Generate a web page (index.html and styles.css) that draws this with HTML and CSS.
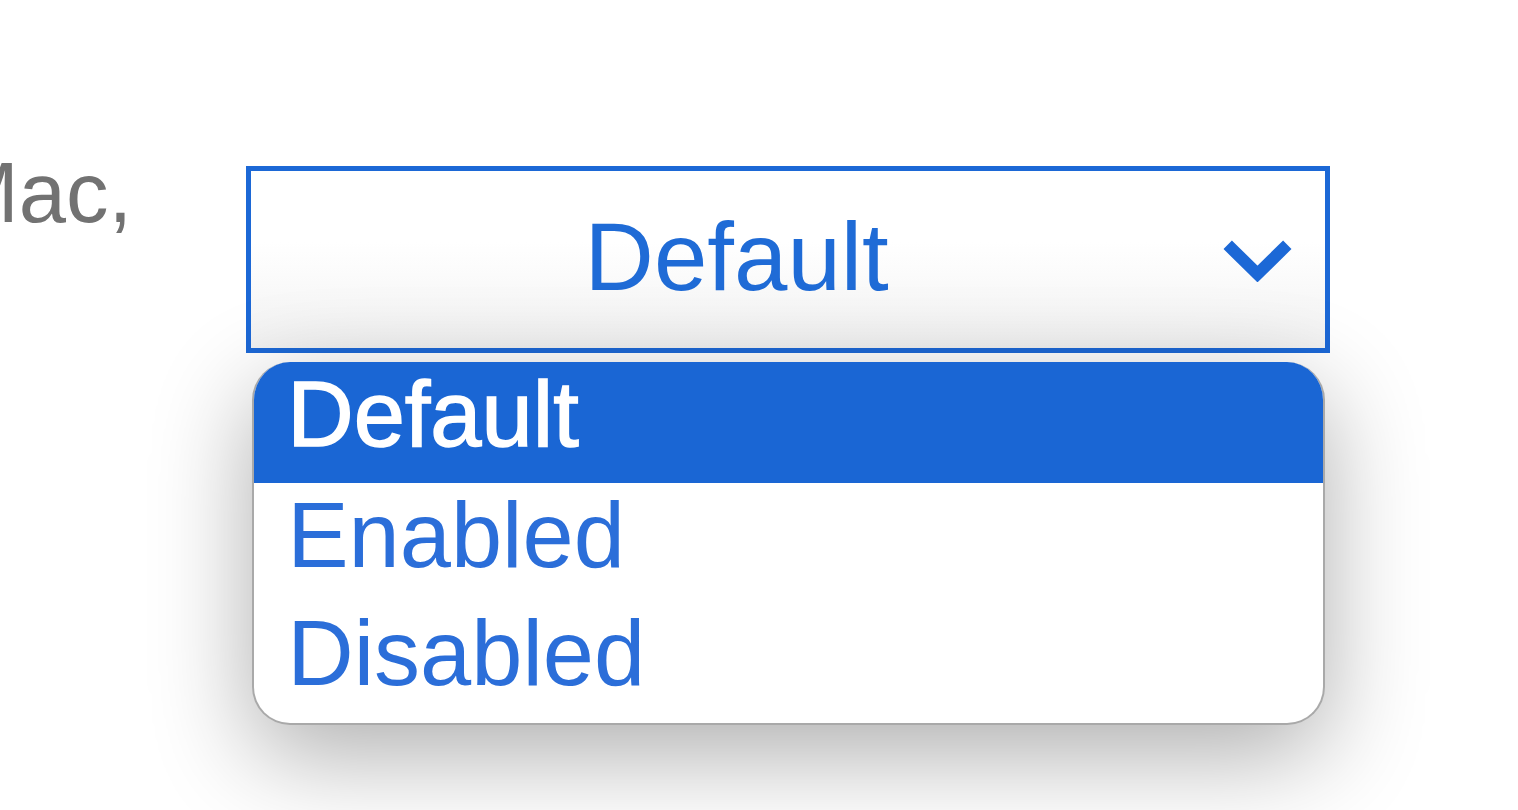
FILE: index.html
```html
<!DOCTYPE html>
<html lang="en">
<head>
    <meta charset="UTF-8">
    <meta name="viewport" content="width=device-width, initial-scale=1.0">
    <link rel="stylesheet" href="styles.css">
</head>
<body>
<div class="row">
    <span class="label">Mac,</span>
    <div class="picker">
        <div class="select">
            <span class="value">Default</span>
            <svg class="chevron" width="71" height="45" viewBox="0 0 71 45">
                <polyline points="10,12 35.5,37 61,12" fill="none" stroke="#1c68d6" stroke-width="12" stroke-linejoin="miter" stroke-linecap="square"/>
            </svg>
        </div>
        <ul class="options">
            <li class="option selected">Default</li>
            <li class="option">Enabled</li>
            <li class="option">Disabled</li>
        </ul>
    </div>
</div>
</body>
</html>
```

FILE: styles.css
```css
html, body {
    height: 100%;
}

body {
    margin: 0;
    background-color: #fff;
    font-family: "Liberation Sans", Arial, sans-serif;
    overflow: hidden;
}

.row {
    display: flex;
    align-items: flex-start;
    padding-top: 144px;
}

.label {
    margin-left: -52px;
    font-size: 85px;
    color: #727272;
}

.picker {
    display: flex;
    flex-direction: column;
    width: 1084px;
    margin-left: 114px;
    margin-top: 22px;
}

.select {
    display: flex;
    align-items: center;
    box-sizing: border-box;
    height: 187px;
    border: 5px solid #1c68d6;
    background: linear-gradient(to bottom, #ffffff 40%, #f2f2f2 100%);
}

.value {
    flex: 1;
    text-align: center;
    font-size: 96px;
    color: #1f6bd6;
    padding-bottom: 6px;
}

.chevron {
    margin-right: 32px;
}

.options {
    list-style: none;
    margin: 9px 5px 0 6px;
    padding: 0 0 4px;
    background-color: #fff;
    border: 2px solid #a9a9a9;
    border-top: none;
    border-radius: 38px;
    overflow: hidden;
    box-shadow: 0 30px 100px rgba(0, 0, 0, 0.32);
}

.option {
    padding: 0 0 14px 33px;
    font-size: 92px;
    line-height: 104px;
    color: #2b6ed9;
}

.option.selected {
    padding-bottom: 17px;
    margin: 0 -2px;
    padding-left: 35px;
    background-color: #1a66d4;
    color: #fff;
    -webkit-text-stroke: 1.5px #fff;
}
```
